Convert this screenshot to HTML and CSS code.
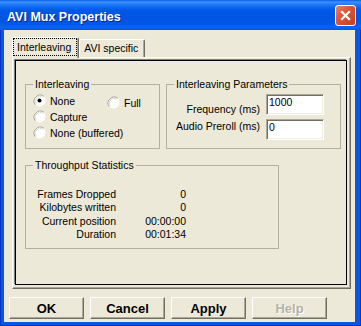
FILE: index.html
```html
<!DOCTYPE html>
<html lang="en">
<head>
  <meta charset="UTF-8">
  <title>AVI Mux Properties</title>
  <link rel="stylesheet" href="styles.css">
</head>
<body>
  <div class="window">
    <div class="titlebar">
      <span class="title">AVI Mux Properties</span>
      <div class="close">
        <svg width="13" height="13" viewBox="0 0 13 13"><path d="M3 3 L10 10 M10 3 L3 10" stroke="#fff" stroke-width="2.2" stroke-linecap="square"/></svg>
      </div>
    </div>

    <div class="client">
      <div class="tabs">
        <div class="tab active"><span class="focus">Interleaving</span></div>
        <div class="tab">AVI specific</div>
      </div>

      <div class="page">
        <div class="frame">
          <div class="row">
            <fieldset class="group g-inter">
              <legend>Interleaving</legend>
              <div class="radios">
                <div class="radio-row">
                  <label class="opt opt-none">
                    <svg class="radio" width="13" height="13" viewBox="0 0 13 13"><circle cx="6.5" cy="6.5" r="6" fill="#fff"/><path d="M2.3 10.7 A6 6 0 0 1 10.7 2.3" fill="none" stroke="#a09d8f"/><path d="M3.4 9.6 A4.4 4.4 0 0 1 9.6 3.4" fill="none" stroke="#dcd9cc"/><circle cx="6.5" cy="6.5" r="2" fill="#000"/></svg>
                    None
                  </label>
                  <label class="opt opt-full">
                    <svg class="radio" width="13" height="13" viewBox="0 0 13 13"><circle cx="6.5" cy="6.5" r="6" fill="#fff"/><path d="M2.3 10.7 A6 6 0 0 1 10.7 2.3" fill="none" stroke="#a09d8f"/><path d="M3.4 9.6 A4.4 4.4 0 0 1 9.6 3.4" fill="none" stroke="#dcd9cc"/></svg>
                    Full
                  </label>
                </div>
                <label class="opt">
                  <svg class="radio" width="13" height="13" viewBox="0 0 13 13"><circle cx="6.5" cy="6.5" r="6" fill="#fff"/><path d="M2.3 10.7 A6 6 0 0 1 10.7 2.3" fill="none" stroke="#a09d8f"/><path d="M3.4 9.6 A4.4 4.4 0 0 1 9.6 3.4" fill="none" stroke="#dcd9cc"/></svg>
                  Capture
                </label>
                <label class="opt">
                  <svg class="radio" width="13" height="13" viewBox="0 0 13 13"><circle cx="6.5" cy="6.5" r="6" fill="#fff"/><path d="M2.3 10.7 A6 6 0 0 1 10.7 2.3" fill="none" stroke="#a09d8f"/><path d="M3.4 9.6 A4.4 4.4 0 0 1 9.6 3.4" fill="none" stroke="#dcd9cc"/></svg>
                  None (buffered)
                </label>
              </div>
            </fieldset>

            <fieldset class="group g-params">
              <legend>Interleaving Parameters</legend>
              <div class="params">
                <span class="plabel p1">Frequency (ms)</span>
                <div class="edit">1000</div>
                <span class="plabel p2">Audio Preroll (ms)</span>
                <div class="edit">0</div>
              </div>
            </fieldset>
          </div>

          <fieldset class="group g-stats">
            <legend>Throughput Statistics</legend>
            <div class="stats">
              <span>Frames Dropped</span><span>0</span>
              <span>Kilobytes written</span><span>0</span>
              <span>Current position</span><span>00:00:00</span>
              <span>Duration</span><span>00:01:34</span>
            </div>
          </fieldset>
        </div>
      </div>

      <div class="buttons">
        <button class="btn">OK</button>
        <button class="btn">Cancel</button>
        <button class="btn">Apply</button>
        <button class="btn" disabled>Help</button>
      </div>
    </div>
  </div>
</body>
</html>
```

FILE: styles.css
```css
* {
  box-sizing: border-box;
}
body {
  margin: 0;
  background: #fff;
  font-family: "Liberation Sans", Arial, sans-serif;
  font-size: 10.5px;
  color: #000;
}
.window {
  width: 361px;
  height: 326px;
  display: flex;
  flex-direction: column;
  background: #0756e4;
  box-shadow: inset 0 0 0 1px #0a34c0;
}
.titlebar {
  height: 30px;
  flex: none;
  display: flex;
  align-items: center;
  justify-content: space-between;
  padding: 0 5px 0 7px;
  background: linear-gradient(to bottom, #0a5de6 0, #3d90fb 2px, #1a76f6 5px, #0059e7 10px, #0054e2 18px, #0058e8 24px, #0566f2 27px, #0056e2 30px);
}
.title {
  margin-top: 3px;
  color: #fff;
  font-weight: bold;
  font-size: 12.5px;
  text-shadow: 1px 1px 0 #0a1e8c;
}
.close {
  width: 21px;
  height: 21px;
  border: 1px solid #fff;
  border-radius: 3px;
  background: linear-gradient(135deg, #e8826a 0, #d9573a 40%, #c4401f 100%);
  display: flex;
  align-items: center;
  justify-content: center;
}
.client {
  flex: 1;
  margin: 0 6px 4px 4px;
  padding-top: 7px;
  background: #ece9d8;
}

/* tabs */
.tabs {
  display: flex;
  align-items: flex-end;
  height: 20px;
  margin-left: 8px;
}
.tab {
  height: 18px;
  line-height: 17px;
  padding: 0 6px 0 4px;
  border: 1px solid;
  border-bottom: none;
  border-color: #fff #716f64 #fff #fff;
  border-radius: 2px 2px 0 0;
  box-shadow: inset -1px 0 0 #aca899;
  background: #ece9d8;
  white-space: nowrap;
}
.tab.active {
  height: 21px;
  margin-bottom: -1px;
  padding: 0 1px 0 0;
  position: relative;
  z-index: 1;
}
.focus {
  display: block;
  height: 18px;
  line-height: 16px;
  padding: 0 5px 0 3px;
  border: 1px dotted #000;
}

/* page */
.page {
  margin-left: 8px;
  width: 339px;
  height: 232px;
  padding: 2px 3px 3px 2px;
  border: 1px solid;
  border-color: #fff #716f64 #716f64 #fff;
  box-shadow: inset -1px -1px 0 #aca899;
}
.frame {
  height: 100%;
  border: 1px solid #000;
  box-shadow: -1px -1px 0 #808080;
}
.row {
  display: flex;
  gap: 6px;
  margin: 17px 0 0 9px;
}
.group {
  margin: 0;
  padding: 0;
  min-width: 0;
  border: 1px solid #b3b09f;
}
.group legend {
  margin-left: 7px;
  padding: 0 2px;
  line-height: 13px;
}
.g-inter {
  width: 135px;
  height: 71px;
}
.g-params {
  width: 175px;
  height: 71px;
}
.g-stats {
  width: 254px;
  height: 90px;
  margin: 10px 0 0 9px;
}

/* radios */
.radios {
  display: flex;
  flex-direction: column;
  gap: 1px;
  padding: 2px 0 0 7px;
}
.radio-row {
  display: flex;
  align-items: flex-start;
  height: 15px;
}
.opt {
  display: flex;
  align-items: center;
  height: 15px;
  white-space: nowrap;
}
.opt-none {
  width: 74px;
}
.opt-full {
  margin-top: 2px;
}
.radio {
  flex: none;
  margin-right: 4px;
}

/* parameters */
.params {
  display: grid;
  grid-template-columns: 93px 58px;
  column-gap: 6px;
  row-gap: 3px;
  padding-top: 3px;
}
.plabel {
  justify-self: end;
  align-self: start;
  line-height: 13px;
  white-space: nowrap;
}
.p1 {
  margin-top: 9px;
}
.p2 {
  margin-top: 1px;
}
.edit {
  height: 21px;
  padding: 1px 0 0 2px;
  line-height: 13px;
  background: #fff;
  border: 1px solid;
  border-color: #aca899 #fff #fff #aca899;
  box-shadow: inset 1px 1px 0 #716f64, inset -1px -1px 0 #f1efe2;
}

/* statistics */
.stats {
  display: grid;
  grid-template-columns: 90px 70px;
  line-height: 13.3px;
  text-align: right;
  padding-top: 16px;
  white-space: nowrap;
}

/* buttons */
.buttons {
  display: flex;
  gap: 6px;
  margin: 8px 0 0 5px;
}
.btn {
  width: 75px;
  height: 22px;
  padding: 0;
  font-family: "Liberation Sans", Arial, sans-serif;
  font-weight: bold;
  font-size: 13px;
  color: #000;
  background: #ece9d8;
  border: 1px solid;
  border-color: #fff #716f64 #716f64 #fff;
  box-shadow: inset -1px -1px 0 #aca899;
}
.btn:disabled {
  color: #b5b2a3;
  text-shadow: 1px 1px 0 #fff;
}
```
